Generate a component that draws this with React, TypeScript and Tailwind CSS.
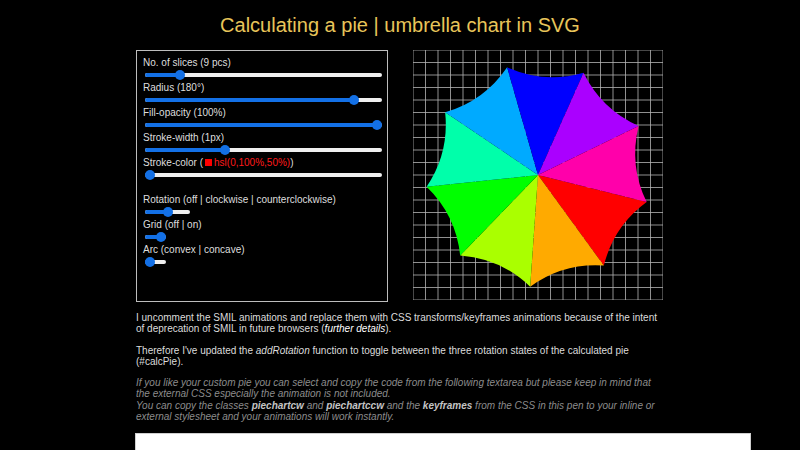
import React from "react";

const font = { fontFamily: '"Liberation Sans", Arial, sans-serif' };

function Slider({ width, value }: { width: number; value: number }) {
    const center = 5 + value * (width - 10);
    return (
        <div className="relative ml-[2px] flex h-[12px] items-center" style={{ width }}>
            <div className="h-[4px] w-full overflow-hidden rounded-full bg-[#efefef]">
                <div className="h-full bg-[#1370e6]" style={{ width: center }} />
            </div>
            <div
                className="absolute top-[1px] h-[10px] w-[10px] rounded-full bg-[#1370e6]"
                style={{ left: center - 5 }}
            />
        </div>
    );
}

function Label({ children }: { children: React.ReactNode }) {
    return <div className="h-[13px] text-[10px] leading-[13px] text-[#dedede]">{children}</div>;
}

function Pie() {
    const cx = 125;
    const cy = 125;
    const r = 112;
    const lines = [];
    for (let i = 0; i <= 20; i++) {
        const p = i * 12.5;
        lines.push(<line key={"v" + i} x1={p} y1={0} x2={p} y2={250} />);
        lines.push(<line key={"h" + i} x1={0} y1={p} x2={250} y2={p} />);
    }
    const slices = [];
    for (let k = 0; k < 9; k++) {
        const a1 = ((14 + 40 * k) * Math.PI) / 180;
        const a2 = ((54 + 40 * k) * Math.PI) / 180;
        const x1 = cx + r * Math.cos(a1);
        const y1 = cy + r * Math.sin(a1);
        const x2 = cx + r * Math.cos(a2);
        const y2 = cy + r * Math.sin(a2);
        slices.push(
            <path
                key={k}
                d={`M${cx},${cy} L${x1},${y1} A${r},${r} 0 0 0 ${x2},${y2} Z`}
                fill={`hsl(${40 * k},100%,50%)`}
            />
        );
    }
    return (
        <svg width={250} height={250} viewBox="0 0 250 250" className="block">
            <g stroke="#b5b5b5" strokeWidth={0.8}>{lines}</g>
            {slices}
        </svg>
    );
}

export default function App() {
    return (
        <div className="h-[450px] w-[800px] overflow-hidden bg-black" style={font}>
            <h1 className="pt-[13px] text-center text-[20px] leading-[24px] text-[#e8c55a]">
                Calculating a pie | umbrella chart in SVG
            </h1>

            <div className="ml-[136px] mt-[13px] flex gap-[25px]">
                <div className="h-[252px] w-[252px] border border-[#bdbdbd] px-[6px] pt-[5px]">
                    <Label>No. of slices (9 pcs)</Label>
                    <Slider width={237} value={0.132} />
                    <Label>Radius (180°)</Label>
                    <Slider width={237} value={0.9} />
                    <Label>Fill-opacity (100%)</Label>
                    <Slider width={237} value={1} />
                    <Label>Stroke-width (1px)</Label>
                    <Slider width={237} value={0.33} />
                    <Label>
                        Stroke-color (<span className="mx-[2px] inline-block h-[7px] w-[7px] bg-[#ff0000]" />
                        <span className="text-[#ff1a1a]">hsl(0,100%,50%)</span>)
                    </Label>
                    <Slider width={237} value={0} />

                    <div className="mt-[12px]">
                        <Label>Rotation (off | clockwise | counterclockwise)</Label>
                        <Slider width={45} value={0.5} />
                        <Label>Grid (off | on)</Label>
                        <Slider width={21} value={1} />
                        <Label>Arc (convex | concave)</Label>
                        <Slider width={21} value={0} />
                    </div>
                </div>
                <Pie />
            </div>

            <div className="ml-[136px] mt-[10px] w-[615px] text-[10px] leading-[11.3px]">
                <p className="text-[#dcdcdc]">
                    I uncomment the SMIL animations and replace them with CSS transforms/keyframes animations because of the intent
                    <br />
                    of deprecation of SMIL in future browsers (<i className="text-white">further details</i>).
                </p>
                <p className="mt-[10px] text-[#dcdcdc]">
                    Therefore I've updated the <i>addRotation</i> function to toggle between the three rotation states of the calculated pie
                    <br />
                    (#calcPie).
                </p>
                <p className="mt-[10px] italic text-[#8c8c8c]">
                    If you like your custom pie you can select and copy the code from the following textarea but please keep in mind that
                    <br />
                    the external CSS especially the animation is not included.
                    <br />
                    You can copy the classes <b className="text-[#c4c4c4]">piechartcw</b> and{" "}
                    <b className="text-[#c4c4c4]">piechartccw</b> and the <b className="text-[#c4c4c4]">keyframes</b> from the CSS in this pen to your inline or
                    <br />
                    external stylesheet and your animations will work instantly.
                </p>
            </div>

            <textarea
                readOnly
                className="ml-[135px] mt-[11px] block h-[60px] w-[616px] resize-none border border-[#cfcfcf] bg-white"
            />
        </div>
    );
}
